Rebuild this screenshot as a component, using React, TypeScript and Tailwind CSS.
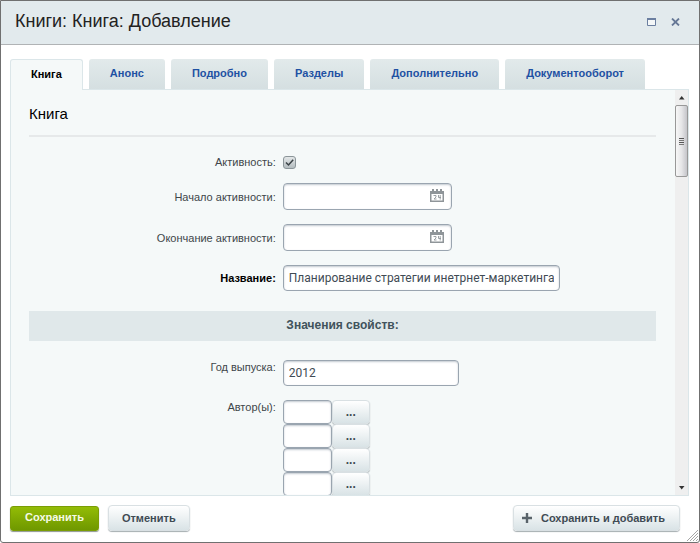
import React from "react";

const tabs = ["Книга", "Анонс", "Подробно", "Разделы", "Дополнительно", "Документооборот"];

const field =
  "rounded-[4px] border border-[#9aa5b0] bg-white px-[5px] font-[Roboto,'Liberation_Sans',sans-serif] text-[12px] text-[#3f4b54] shadow-[inset_0_1px_2px_#c3c9d0] outline-none";
const softButton =
  "rounded-[4px] border border-[#d9e0e3] bg-linear-to-b from-white to-[#d9e3e6] font-bold text-[#3f4b54] shadow-[0_1px_1px_#a5adb0]";

function CalendarIcon() {
  return (
    <svg className="block" width="14" height="13" viewBox="0 0 14 13" aria-hidden="true">
      <path d="M0 2h14v11H0zM2 0h2v2H2zM6 0h2v2H6zM10 0h2v2h-2z" fill="#8f9599" />
      <path d="M1.500 5h11v6.500h-11z" fill="#fff" />
      <path
        d="M3.500 6.500h2.500v1.500L4 10h2.500M8.500 6v2.500h2.500M10.200 6v4.500"
        fill="none"
        stroke="#92979c"
        strokeWidth=".9"
      />
    </svg>
  );
}

function Row({ id, label, bold, top, children }: {
  id: string;
  label: string;
  bold?: boolean;
  top?: boolean;
  children: React.ReactNode;
}) {
  return (
    <div className={`grid grid-cols-[40%_1fr] ${top ? "items-start" : "items-center"}`}>
      <label
        htmlFor={id}
        className={`pr-1 text-right leading-[14px] ${bold ? "font-bold text-black" : "text-[#40464a]"}`}
      >
        {label}
      </label>
      <div className="flex pl-[3px]">{children}</div>
    </div>
  );
}

function DateField({ id }: { id: string }) {
  return (
    <div className="relative">
      <input id={id} type="text" className={`block h-[27px] w-[169px] ${field}`} />
      <button type="button" aria-label="Календарь" className="absolute top-[6px] right-2">
        <CalendarIcon />
      </button>
    </div>
  );
}

function Scrollbar() {
  return (
    <div className="flex w-[13px] shrink-0 flex-col items-center bg-[#efefef]" aria-hidden="true">
      <svg width="13" height="15" viewBox="0 0 13 15">
        <path d="M4 9.500h5.500L6.700 6z" fill="#333" />
      </svg>
      <div className="flex h-[72px] w-[13px] flex-col items-center justify-center gap-px rounded-[2px] border border-[#989898] bg-linear-to-r from-[#f7f7f7] via-[#e6e6e8] to-[#c5c5ca]">
        <i className="h-px w-[5px] bg-[#555]" />
        <i className="h-px w-[5px] bg-[#777]" />
        <i className="h-px w-[5px] bg-[#555]" />
        <i className="h-px w-[5px] bg-[#777]" />
      </div>
      <svg className="mt-auto" width="13" height="15" viewBox="0 0 13 15">
        <path d="M4 6h5.500L6.700 9.500z" fill="#333" />
      </svg>
    </div>
  );
}

export default function App() {
  return (
    <div
      role="dialog"
      aria-labelledby="dialog-title"
      className="relative flex h-screen flex-col overflow-hidden rounded-b-[3px] border border-[#707070] bg-white font-['Liberation_Sans',Arial,sans-serif] text-[11px]"
    >
      <header className="flex h-11 shrink-0 items-center border-b border-[#b0b3b5] bg-[#e2eaed] pr-[19px] pl-[14px]">
        <h1 id="dialog-title" className="flex-1 pb-1 text-[18px] leading-6 text-[#222]">
          Книги: Книга: Добавление
        </h1>
        <div className="flex items-center gap-[15px] pb-[2px]">
          <button type="button" aria-label="Развернуть">
            <svg className="block" width="9" height="8" viewBox="0 0 9 8">
              <path d="M.5.500h8v7h-8z" fill="#f4f7f8" stroke="#6b7fa0" />
              <path d="M0 1h9" stroke="#6b7fa0" strokeWidth="2" />
            </svg>
          </button>
          <button type="button" aria-label="Закрыть">
            <svg className="block" width="9" height="8" viewBox="0 0 9 8">
              <path d="M1 .5l7 7M8 .5l-7 7" stroke="#667896" strokeWidth="1.800" />
            </svg>
          </button>
        </div>
      </header>

      <nav role="tablist" className="mx-[9px] mt-[14px] flex shrink-0 gap-[6px]">
        {tabs.map((t, i) => (
          <button
            key={t}
            type="button"
            role="tab"
            aria-selected={i === 0}
            className={
              i === 0
                ? "z-10 -mb-px h-[31px] rounded-t-[3px] border border-b-0 border-[#dbe6e9] bg-[#f5f9f9] px-5 pb-[2px] font-bold text-black"
                : "h-[30px] rounded-t-[3px] bg-linear-to-b from-[#e2eaeb] to-[#d5dfe1] px-[21px] pb-px font-bold text-[#1f51a3]"
            }
          >
            {t}
          </button>
        ))}
      </nav>

      <main className="mr-[10px] ml-[9px] flex min-h-0 flex-1 border border-[#dbe6e9] bg-[#f5f9f9]">
        <form id="book" className="min-w-0 flex-1 overflow-hidden pr-[19px] pl-[18px]">
          <h2 className="border-b-2 border-[#e6e9ea] pt-[14px] pb-[11px] text-[15px] leading-5 text-black">
            Книга
          </h2>
          <div className="mt-[18px] flex flex-col gap-[14px]">
            <Row id="active" label="Активность:">
              <span className="relative block size-[13px]">
                <input
                  id="active"
                  type="checkbox"
                  defaultChecked
                  className="block size-[13px] appearance-none rounded-[3px] border border-[#8b9599] bg-linear-to-b from-[#e3e7e8] to-[#b4bdc0]"
                />
                <svg className="pointer-events-none absolute inset-0" width="13" height="13" viewBox="0 0 13 13">
                  <path d="M3 6.500l2.500 2.500 4.700-5.300" fill="none" stroke="#3b4347" strokeWidth="1.500" />
                </svg>
              </span>
            </Row>
            <Row id="from" label="Начало активности:">
              <DateField id="from" />
            </Row>
            <Row id="to" label="Окончание активности:">
              <DateField id="to" />
            </Row>
            <Row id="name" label="Название:" bold>
              <input
                id="name"
                type="text"
                defaultValue="Планирование стратегии инетрнет-маркетинга"
                className={`h-[26px] w-[277px] ${field}`}
              />
            </Row>
          </div>
          <h3 className="mt-5 bg-[#e0e8ea] pb-[2px] text-center text-[12px] leading-[28px] font-bold text-[#41535c]">
            Значения свойств:
          </h3>
          <div className="mt-[19px] flex flex-col gap-[14px]">
            <Row id="year" label="Год выпуска:" top>
              <input id="year" type="text" defaultValue="2012" className={`h-[26px] w-[176px] ${field}`} />
            </Row>
            <Row id="author-0" label="Автор(ы):" top>
              <div>
                {[0, 1, 2, 3].map((i) => (
                  <div key={i} className="flex">
                    <input
                      id={`author-${i}`}
                      aria-label="Автор"
                      type="text"
                      className={`h-[24px] w-[49px] ${field}`}
                    />
                    <button type="button" aria-label="Выбрать автора" className={`h-[24px] w-[38px] text-[12px] ${softButton}`}>
                      ...
                    </button>
                  </div>
                ))}
              </div>
            </Row>
          </div>
        </form>
        <Scrollbar />
      </main>

      <footer className="flex shrink-0 items-center gap-[9px] pt-[9px] pr-[19px] pb-[11px] pl-[9px]">
        <button
          type="submit"
          form="book"
          className="h-[25px] rounded-[3px] border border-[#7a9d05] bg-linear-to-b from-[#93bc06] to-[#6f9800] px-[14px] pb-[2px] font-bold text-[#f6fae6] shadow-[0_1px_1px_#8d9690]"
        >
          Сохранить
        </button>
        <button type="button" className={`h-[26px] px-[13px] ${softButton}`}>
          Отменить
        </button>
        <button type="button" className={`ml-auto flex h-[26px] items-center gap-[9px] pr-[14px] pl-2 ${softButton}`}>
          <svg width="10" height="10" viewBox="0 0 10 10" aria-hidden="true">
            <path d="M5 0v10M0 5h10" stroke="#59636a" strokeWidth="2.400" />
          </svg>
          Сохранить и добавить
        </button>
      </footer>
      <svg className="absolute right-px bottom-px" width="11" height="11" viewBox="0 0 11 11" aria-hidden="true">
        <path d="M0 11L11 0M3 11l8-8M6 11l5-5M9 11l2-2" stroke="#a5a5a5" />
      </svg>
    </div>
  );
}
